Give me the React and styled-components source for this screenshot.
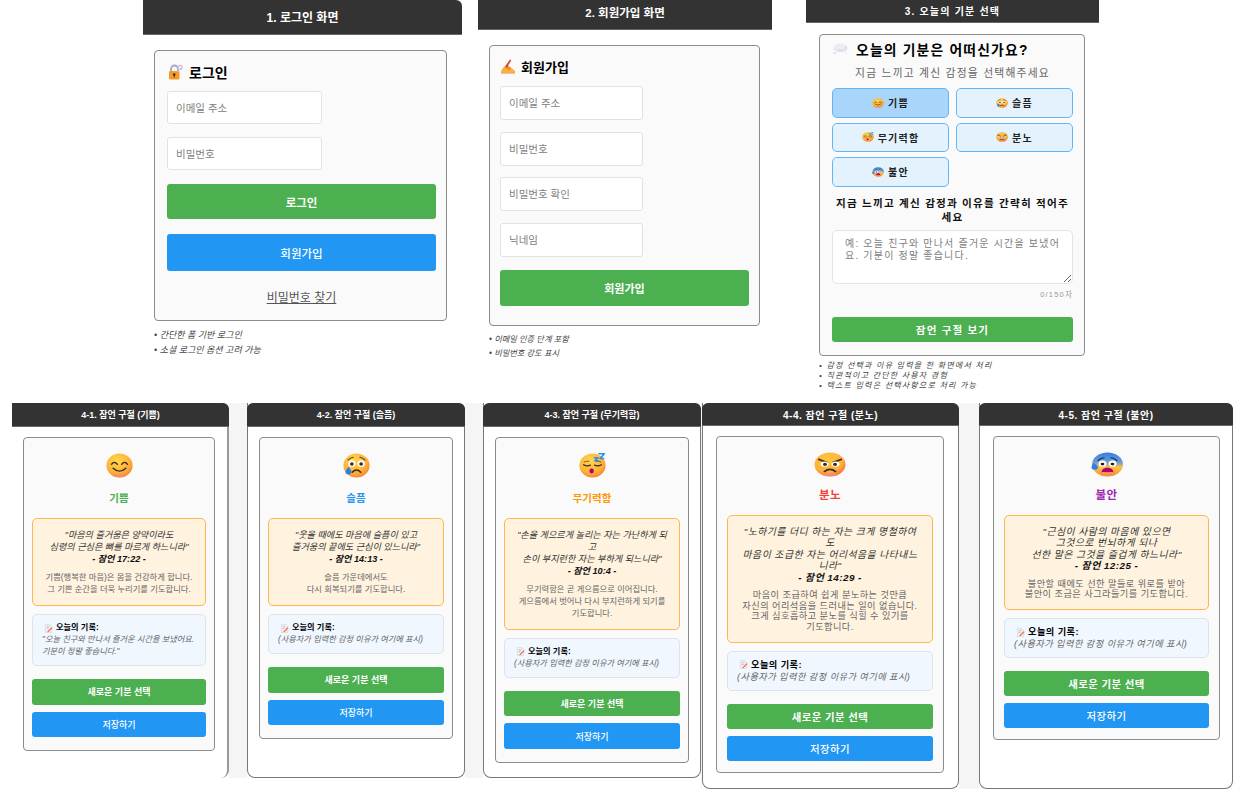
import React from "react"
import styled, { createGlobalStyle } from "styled-components"

const GlobalStyle = createGlobalStyle`
  html, body {
    margin: 0;
    padding: 0;
    background: #fff;
  }
  body {
    width: 1259px;
    height: 797px;
    overflow: hidden;
    font-family: "Liberation Sans", "Noto Sans CJK KR", sans-serif;
  }
`

/* emoji drawings, stretched a little like the reference shots */
function Face({ id, w, h, children, from = "#ffd84d", to = "#f2742f" }) {
  return (
    <svg width={w} height={h} viewBox="0 0 32 32" preserveAspectRatio="none">
      <defs>
        <radialGradient id={id} cx="0.42" cy="0.32" r="0.78">
          <stop offset="0" stopColor={from} />
          <stop offset="0.62" stopColor="#fdb03a" />
          <stop offset="1" stopColor={to} />
        </radialGradient>
      </defs>
      <circle cx="16" cy="16" r="15.500" fill={`url(#${id})`} />
      {children}
    </svg>
  )
}

const Happy = (props) => (
  <Face {...props}>
    <path d="M6.500 14.500q3.500-5 7 0M18.500 14.500q3.500-5 7 0" fill="none" stroke="#3d2a1e" strokeWidth="1.700" strokeLinecap="round" />
    <path d="M8.500 19.500q7.500 7.500 15 0" fill="none" stroke="#3d2a1e" strokeWidth="1.700" strokeLinecap="round" />
    <ellipse cx="16" cy="28.500" rx="9" ry="2.500" fill="#f58a8a" opacity="0.45" />
  </Face>
)

const Sad = (props) => (
  <Face {...props}>
    <path d="M6 9q3-3 6-3.500M20 5.500q3 .5 6 3.500" fill="none" stroke="#5a3a22" strokeWidth="1.300" strokeLinecap="round" />
    <circle cx="10.500" cy="13.500" r="4.300" fill="#fff" />
    <circle cx="21.500" cy="13.500" r="4.300" fill="#fff" />
    <circle cx="10.500" cy="14" r="2.200" fill="#3d2a1e" />
    <circle cx="21.500" cy="14" r="2.200" fill="#3d2a1e" />
    <path d="M11 24.500q5-5.500 10 0" fill="none" stroke="#3d2a1e" strokeWidth="1.900" strokeLinecap="round" />
    <path d="M6.500 17.500c-2.500 3.500-3.500 5-3.500 6.500a3.500 3.500 0 0 0 7 0c0-1.500-1-3-3.500-6.500z" fill="#2f7fe0" />
  </Face>
)

const Sleepy = (props) => (
  <Face {...props}>
    <path d="M5.500 15q4 2.500 8 .5M18.500 15.500q4 2 8-.5" fill="none" stroke="#3d2a1e" strokeWidth="1.500" strokeLinecap="round" />
    <path d="M6 11.500q3-1.500 6-1M20 10.500q3-.5 6 1" fill="none" stroke="#6b4526" strokeWidth="1" strokeLinecap="round" />
    <ellipse cx="15" cy="23" rx="2.600" ry="3.100" fill="#b3006b" />
    <path d="M23 1h7l-5 6h5M17.500 6h5l-3.500 4h4" fill="none" stroke="#2f8cf0" strokeWidth="2" strokeLinejoin="round" />
  </Face>
)

const Angry = (props) => (
  <Face {...props} from="#ffc83d" to="#f0562f">
    <path d="M5 9.500l8 4M27 9.500l-8 4" stroke="#3d2a1e" strokeWidth="2.200" strokeLinecap="round" />
    <ellipse cx="10.500" cy="15.500" rx="4" ry="3.300" fill="#fff" />
    <ellipse cx="21.500" cy="15.500" rx="4" ry="3.300" fill="#fff" />
    <circle cx="11" cy="15.800" r="2" fill="#3d2a1e" />
    <circle cx="21" cy="15.800" r="2" fill="#3d2a1e" />
    <path d="M10.500 25q5.500-5.500 11 0" fill="none" stroke="#3d2a1e" strokeWidth="2" strokeLinecap="round" />
    <ellipse cx="16" cy="29" rx="8" ry="1.800" fill="#f58ab0" opacity="0.6" />
  </Face>
)

const Fearful = ({ id, w, h }) => (
  <svg width={w} height={h} viewBox="0 0 32 32" preserveAspectRatio="none">
    <defs>
      <linearGradient id={id} x1="0" y1="0" x2="0" y2="1">
        <stop offset="0" stopColor="#2f7fe8" />
        <stop offset="0.42" stopColor="#6f9fd0" />
        <stop offset="0.62" stopColor="#ffc23d" />
        <stop offset="1" stopColor="#f58a2f" />
      </linearGradient>
    </defs>
    <circle cx="16.500" cy="16" r="15.500" fill={`url(#${id})`} />
    <path d="M7 11q3-3.500 6-3.500M20 7.500q3 0 6 3.500" fill="none" stroke="#2b2b3a" strokeWidth="1.300" strokeLinecap="round" />
    <circle cx="11.500" cy="15" r="4" fill="#fff" />
    <circle cx="21.500" cy="15" r="4" fill="#fff" />
    <circle cx="11.500" cy="15.500" r="1.900" fill="#2b2015" />
    <circle cx="21.500" cy="15.500" r="1.900" fill="#2b2015" />
    <path d="M10.500 27c0-5 2.500-7 6-7s6 2 6 7c-4-1.300-8-1.300-12 0z" fill="#b3006b" />
    <path d="M10.500 27c4-1.300 8-1.300 12 0l-1-1.500h-10z" fill="#f8c8d8" />
    <path d="M3 14c-2 2.500-2.500 4-2.500 5.500a3.200 3.200 0 0 0 6.400 0c0-1.500-1.400-3-3.900-5.500z" fill="#2f7fe0" />
  </svg>
)

const Lock = () => (
  <svg width="16" height="16" viewBox="0 0 16 16">
    <path d="M4 8V5a3.500 3.500 0 0 1 7 0v3" fill="none" stroke="#a8a4c4" strokeWidth="1.800" />
    <rect x="2" y="7" width="10.500" height="8.500" rx="1.200" fill="#f59a2e" />
    <circle cx="7.200" cy="10.500" r="1.300" fill="#4a2c10" />
    <rect x="6.700" y="10.500" width="1" height="3" fill="#4a2c10" />
    <circle cx="13" cy="3.500" r="2" fill="none" stroke="#c7bfe0" strokeWidth="1.300" />
    <path d="M12 5l-1.500 3" stroke="#c7bfe0" strokeWidth="1.300" />
  </svg>
)

const WritingHand = () => (
  <svg width="16" height="16" viewBox="0 0 16 16">
    <path d="M1 15c0-3 1-4.500 3-6l3-1.500 5 3 3 2.500v2z" fill="#fbb03b" />
    <path d="M4 9.500l2.500-2.500 5 3-2 2.500z" fill="#f58f2a" />
    <path d="M5 8.500L10 1.500l1.300.8L7 9.500z" fill="#d8402f" />
    <path d="M1 15h14v.800H1z" fill="#f6a8a0" />
  </svg>
)

const Balloon = () => (
  <svg width="17" height="12" viewBox="0 0 17 12">
    <ellipse cx="8.500" cy="5" rx="7" ry="4" fill="#dfe0ea" />
    <circle cx="5" cy="4" r="2.800" fill="#eceef4" />
    <circle cx="10" cy="3.500" r="3" fill="#eceef4" />
    <ellipse cx="2.500" cy="10" rx="1.500" ry="1" fill="#dfe0ea" />
    <ellipse cx="14" cy="10" rx="1" ry="0.800" fill="#e7e8ef" />
  </svg>
)

const Memo = () => (
  <svg width="9" height="9" viewBox="0 0 10 10">
    <path d="M1.500 .5h5l2 2v7h-7z" fill="#f1eff4" stroke="#c9c6d2" strokeWidth="0.500" />
    <path d="M3 3h3M3 5h2" stroke="#9a97a8" strokeWidth="0.600" />
    <path d="M4 8l4.500-4.500 1 1L5 9l-1.500.3z" fill="#ee6a3a" />
  </svg>
)

/* frames */
const TopRow = styled.div`
  display: flex;
  align-items: flex-start;
  height: 403px;
  padding-left: 143px;
`
const BottomRow = styled.div`
  display: flex;
  align-items: flex-start;
  margin-left: 12px;
`
const Gutter = styled.div`
  flex: none;
  width: ${(p) => p.$width}px;
  height: ${(p) => p.$height}px;
  background: #f5f5f5;
`
const Frame = styled.section`
  flex: none;
  box-sizing: border-box;
  width: ${(p) => p.$width}px;
  height: ${(p) => p.$height}px;
  margin-left: ${(p) => p.$offset || 0}px;
  letter-spacing: ${(p) => p.$spacing || 0}px;
  background: #fff;
  border-radius: 0 8px 8px 8px;
  ${(p) => p.$outlined && "border: solid #777; border-width: 0 1px 1px 1px;"}
  ${(p) => p.$open && "border: solid #999; border-width: 0 2px 0 0;"}
`
const FrameHeader = styled.header`
  display: flex;
  align-items: center;
  justify-content: center;
  box-sizing: border-box;
  height: ${(p) => p.$height}px;
  margin: 0 ${(p) => (p.$outlined ? -1 : 0)}px 0 ${(p) => (p.$outlined ? -1 : 0)}px;
  margin-right: ${(p) => (p.$open ? -2 : p.$outlined ? -1 : 0)}px;
  padding-bottom: ${(p) => p.$lift || 0}px;
  background: #333;
  border-bottom: 1px solid #666;
  border-radius: ${(p) => p.$radius || "0"};
  color: #fff;
  font-size: ${(p) => p.$size}px;
  font-weight: 700;
  ${(p) => p.$track && `letter-spacing: ${p.$track}px;`}
`
const FrameBody = styled.div`
  padding: ${(p) => p.$pad};
`
const Card = styled.div`
  box-sizing: border-box;
  background: #fafafa;
  border: 1px solid #8c8c8c;
  border-radius: 4px;
  padding: ${(p) => p.$pad};
`
const FormTitle = styled.h2`
  display: flex;
  align-items: center;
  gap: ${(p) => p.$iconGap || 5}px;
  margin: 0 0 ${(p) => p.$gap}px;
  height: 20px;
  color: #000;
  font-size: ${(p) => p.$size}px;
  font-weight: 700;
`
const TextInput = styled.input`
  display: block;
  box-sizing: border-box;
  width: ${(p) => p.$width}px;
  height: ${(p) => p.$height || 33}px;
  margin-bottom: ${(p) => p.$gap}px;
  padding: 0 8px;
  background: #fff;
  border: 1px solid #e2e2e2;
  border-radius: 3px;
  font-family: inherit;
  font-size: 10.500px;
  &::placeholder {
    color: #808080;
    opacity: 1;
  }
`
const ActionButton = styled.button`
  display: block;
  width: 100%;
  height: ${(p) => p.$height}px;
  margin: 0 0 ${(p) => p.$gap || 0}px;
  padding: 0;
  border: none;
  border-radius: 3px;
  background: ${(p) => (p.$tone === "blue" ? "#2196f3" : "#4caf50")};
  color: #fff;
  font-family: inherit;
  font-size: ${(p) => p.$size}px;
  font-weight: ${(p) => p.$weight || 700};
  letter-spacing: inherit;
`
const ForgotLink = styled.a`
  display: block;
  margin-top: 19px;
  color: #555;
  font-size: 12px;
  line-height: 16px;
  text-align: center;
  text-decoration: underline;
`
const Notes = styled.ul`
  margin: ${(p) => p.$top}px 0 0 ${(p) => p.$left}px;
  padding: 0;
  list-style: none;
  color: #444;
  font-size: ${(p) => p.$size}px;
  font-style: italic;
  line-height: ${(p) => p.$line}px;
`
const Subtitle = styled.p`
  margin: 0 0 8px;
  color: #666;
  font-size: 10.800px;
  line-height: 14px;
  text-align: center;
`
const MoodGrid = styled.div`
  display: grid;
  grid-template-columns: 117px 117px;
  grid-auto-rows: 29.500px;
  gap: 5px 7px;
`
const MoodButton = styled.button`
  display: flex;
  align-items: center;
  justify-content: center;
  gap: 4px;
  padding: 0;
  border: 1px solid #64b5f6;
  border-radius: 5px;
  background: ${(p) => (p.$active ? "#a9d5fb" : "#e3f2fd")};
  color: #222;
  font-family: inherit;
  font-size: 10px;
  font-weight: 700;
  letter-spacing: inherit;
`
const FieldLabel = styled.label`
  display: block;
  margin: 9px 0 6px;
  color: #111;
  font-size: 10.600px;
  font-weight: 700;
  line-height: 14px;
  text-align: center;
`
const ReasonArea = styled.textarea`
  display: block;
  box-sizing: border-box;
  width: 100%;
  height: 54px;
  padding: 7px 6px 7px 12px;
  background: #fff;
  border: 1px solid #e4e4e4;
  border-radius: 5px;
  font-family: inherit;
  font-size: 10px;
  line-height: 12px;
  letter-spacing: inherit;
  &::placeholder {
    color: #808080;
    opacity: 1;
  }
`
const Counter = styled.div`
  margin: 5px 0 16px;
  color: #999;
  font-size: 7.500px;
  line-height: 12px;
  text-align: right;
`

/* verse screens */
const EmojiSlot = styled.div`
  display: flex;
  justify-content: center;
  height: ${(p) => (p.$big ? 33 : 35)}px;
`
const MoodName = styled.h3`
  margin: 0;
  height: 20px;
  color: ${(p) => p.$color};
  font-size: ${(p) => (p.$big ? 11.500 : 10.500)}px;
  font-weight: 700;
  line-height: 20px;
  text-align: center;
`
const VerseBox = styled.div`
  box-sizing: border-box;
  margin-top: 10px;
  padding: 9.500px ${(p) => (p.$big ? 12 : 9)}px;
  background: #fff3e0;
  border: 1px solid #ffb74d;
  border-radius: 5px;
  text-align: center;
`
const Verse = styled.p`
  margin: 0 0 7px;
  color: #333;
  font-size: ${(p) => (p.$big ? 9.900 : 9.100)}px;
  font-style: italic;
  line-height: ${(p) => (p.$big ? 11.500 : 12.200)}px;
  white-space: pre-line;
`
const VerseRef = styled.strong`
  display: block;
  color: #111;
  font-style: italic;
`
const Comfort = styled.p`
  margin: 0;
  color: #666;
  font-size: ${(p) => (p.$big ? 9.200 : 8.300)}px;
  line-height: ${(p) => (p.$big ? 10.500 : 11.700)}px;
  white-space: pre-line;
`
const RecordBox = styled.div`
  margin: 8px 0 13px;
  padding: 7px 5px 7px 9px;
  background: #f0f7ff;
  border: 1px solid #dde3e8;
  border-radius: 5px;
  font-size: ${(p) => (p.$big ? 9.200 : 8.200)}px;
  line-height: 12px;
`
const RecordTitle = styled.div`
  display: flex;
  align-items: center;
  gap: 3px;
  padding-left: 2px;
  color: #000;
  font-weight: 700;
`
const RecordText = styled.div`
  color: #666;
  font-style: italic;
`

const verses = [
  {
    title: "4-1. 잠언 구절 (기쁨)", Emoji: Happy, mood: "기쁨", color: "#4caf50",
    verse: "\"마음의 즐거움은 양약이라도\n심령의 근심은 뼈를 마르게 하느니라\"",
    ref: "- 잠언 17:22 -",
    comfort: "기쁨(행복한 마음)은 몸을 건강하게 합니다.\n그 기쁜 순간을 더욱 누리기를 기도합니다.",
    record: "\"오늘 친구와 만나서 즐거운 시간을 보냈어요. 기분이 정말 좋습니다.\"",
    width: 217, height: 375, pad: "10px 12px 0 11px", gutter: 0, open: true,
  },
  {
    title: "4-2. 잠언 구절 (슬픔)", Emoji: Sad, mood: "슬픔", color: "#2196f3",
    verse: "\"웃을 때에도 마음에 슬픔이 있고\n즐거움의 끝에도 근심이 있느니라\"",
    ref: "- 잠언 14:13 -",
    comfort: "슬픔 가운데에서도\n다시 회복되기를 기도합니다.",
    width: 218, height: 375, pad: "10px 11px 0 11px", gutter: 18, outlined: true,
  },
  {
    title: "4-3. 잠언 구절 (무기력함)", Emoji: Sleepy, mood: "무기력함", color: "#ff9800",
    verse: "\"손을 게으르게 놀리는 자는 가난하게 되고\n손이 부지런한 자는 부하게 되느니라\"",
    ref: "- 잠언 10:4 -",
    comfort: "무기력함은 곧 게으름으로 이어집니다.\n게으름에서 벗어나 다시 부지런하게 되기를 기도합니다.",
    width: 218, height: 375, pad: "10px 11px 0 11px", gutter: 18, outlined: true,
  },
  {
    title: "4-4. 잠언 구절 (분노)", Emoji: Angry, mood: "분노", color: "#f44336",
    verse: "\"노하기를 더디 하는 자는 크게 명철하여도\n마음이 조급한 자는 어리석음을 나타내느니라\"",
    ref: "- 잠언 14:29 -",
    comfort: "마음이 조급하여 쉽게 분노하는 것만큼\n자신의 어리석음을 드러내는 일이 없습니다.\n크게 심호흡하고 분노를 식힐 수 있기를\n기도합니다.",
    width: 257, height: 386, pad: "10px 14px 0 13px", gutter: 1, outlined: true, big: true,
  },
  {
    title: "4-5. 잠언 구절 (불안)", Emoji: Fearful, mood: "불안", color: "#9c27b0",
    verse: "\"근심이 사람의 마음에 있으면\n그것으로 번뇌하게 되나\n선한 말은 그것을 즐겁게 하느니라\"",
    ref: "- 잠언 12:25 -",
    comfort: "불안할 때에도 선한 말들로 위로를 받아\n불안이 조금은 사그라들기를 기도합니다.",
    width: 254, height: 386, pad: "10px 12px 0 13px", gutter: 20, outlined: true, big: true,
  },
]

function VerseFrame({ item, index }) {
  const { Emoji, big } = item
  return (
    <Frame $width={item.width} $height={item.height} $outlined={item.outlined} $open={item.open} $spacing={big ? 0.45 : 0}>
      <FrameHeader
        $height={big ? 23 : 24}
        $size={big ? 10 : 9}
        $track={big ? 0.5 : 0}
        $radius={item.open ? "0 6px 0 0" : "6px 6px 0 0"}
        $outlined={item.outlined}
        $open={item.open}
      >
        {item.title}
      </FrameHeader>
      <FrameBody $pad={item.pad}>
        <Card $pad={big ? "15px 10px 11px" : "15px 8px 13px"}>
          <EmojiSlot $big={big}>
            <Emoji id={`face-${index}`} w={big ? 32 : 27} h={25} />
          </EmojiSlot>
          <MoodName $big={big} $color={item.color}>{item.mood}</MoodName>
          <VerseBox $big={big}>
            <Verse $big={big}>
              {item.verse}
              <VerseRef>{item.ref}</VerseRef>
            </Verse>
            <Comfort $big={big}>{item.comfort}</Comfort>
          </VerseBox>
          <RecordBox $big={big}>
            <RecordTitle><Memo /> 오늘의 기록:</RecordTitle>
            <RecordText>{item.record || "(사용자가 입력한 감정 이유가 여기에 표시)"}</RecordText>
          </RecordBox>
          <ActionButton $tone="green" $height={big ? 25 : 25.500} $gap={7} $size={big ? 10.400 : 9}>새로운 기분 선택</ActionButton>
          <ActionButton $tone="blue" $height={big ? 25 : 25.500} $size={big ? 10.400 : 9} $weight={500}>저장하기</ActionButton>
        </Card>
      </FrameBody>
    </Frame>
  )
}

const moods = [
  { label: "기쁨", Emoji: Happy, active: true },
  { label: "슬픔", Emoji: Sad },
  { label: "무기력함", Emoji: Sleepy },
  { label: "분노", Emoji: Angry },
  { label: "불안", Emoji: Fearful },
]

export default function App() {
  return (
    <>
      <GlobalStyle />
      <TopRow>
        <Frame $width={319} $height={403}>
          <FrameHeader $height={35} $size={12} $lift={1} $radius="0 6px 0 0">1. 로그인 화면</FrameHeader>
          <FrameBody $pad="15px 15px 0 11px">
            <Card $pad="11px 10px 14px 12px">
              <FormTitle $size={14} $gap={9} $iconGap={6}><Lock /> 로그인</FormTitle>
              <TextInput $width={155} $gap={13} placeholder="이메일 주소" />
              <TextInput $width={155} $gap={14} placeholder="비밀번호" />
              <ActionButton $height={35} $gap={15} $size={11.500}>로그인</ActionButton>
              <ActionButton $tone="blue" $height={37} $size={11.500} $weight={500}>회원가입</ActionButton>
              <ForgotLink>비밀번호 찾기</ForgotLink>
            </Card>
            <Notes $top={7} $left={0} $size={9} $line={14.500}>
              <li>• 간단한 폼 기반 로그인</li>
              <li>• 소셜 로그인 옵션 고려 가능</li>
            </Notes>
          </FrameBody>
        </Frame>
        <Frame $width={294} $height={403} $offset={16}>
          <FrameHeader $height={30} $size={11.500} $lift={6}>2. 회원가입 화면</FrameHeader>
          <FrameBody $pad="15px 12px 0 11px">
            <Card $pad="10px 10px 19px 10px">
              <FormTitle $size={13} $gap={10}><WritingHand /> 회원가입</FormTitle>
              <TextInput $width={143} $height={34} $gap={11.500} placeholder="이메일 주소" />
              <TextInput $width={143} $height={34} $gap={11.500} placeholder="비밀번호" />
              <TextInput $width={143} $height={34} $gap={11.500} placeholder="비밀번호 확인" />
              <TextInput $width={143} $height={34} $gap={13} placeholder="닉네임" />
              <ActionButton $height={36} $size={11}>회원가입</ActionButton>
            </Card>
            <Notes $top={7} $left={0} $size={8.200} $line={14.500}>
              <li>• 이메일 인증 단계 포함</li>
              <li>• 비밀번호 강도 표시</li>
            </Notes>
          </FrameBody>
        </Frame>
        <Frame $width={293} $height={403} $offset={34} $spacing={1.2}>
          <FrameHeader $height={23} $size={10} $lift={1}>3. 오늘의 기분 선택</FrameHeader>
          <FrameBody $pad="11px 14px 0 13px">
            <Card $pad="4px 11px 13px 12px">
              <FormTitle $size={13.800} $gap={7} $iconGap={7}><Balloon /> 오늘의 기분은 어떠신가요?</FormTitle>
              <Subtitle>지금 느끼고 계신 감정을 선택해주세요</Subtitle>
              <MoodGrid>
                {moods.map(({ label, Emoji, active }, i) => (
                  <MoodButton key={label} $active={active}>
                    <Emoji id={`pick-${i}`} w={12} h={10} /> {label}
                  </MoodButton>
                ))}
              </MoodGrid>
              <FieldLabel>지금 느끼고 계신 감정과 이유를 간략히 적어주<br />세요</FieldLabel>
              <ReasonArea placeholder="예: 오늘 친구와 만나서 즐거운 시간을 보냈어요. 기분이 정말 좋습니다." />
              <Counter>0/150자</Counter>
              <ActionButton $height={25} $size={10.500}>잠언 구절 보기</ActionButton>
            </Card>
            <Notes $top={5} $left={0} $size={8} $line={10}>
              <li>• 감정 선택과 이유 입력을 한 화면에서 처리</li>
              <li>• 직관적이고 간단한 사용자 경험</li>
              <li>• 텍스트 입력은 선택사항으로 처리 가능</li>
            </Notes>
          </FrameBody>
        </Frame>
      </TopRow>
      <BottomRow>
        {verses.map((item, i) => (
          <React.Fragment key={item.title}>
            {item.gutter > 0 && <Gutter $width={item.gutter} $height={item.height} />}
            <VerseFrame item={item} index={i} />
          </React.Fragment>
        ))}
      </BottomRow>
    </>
  )
}
